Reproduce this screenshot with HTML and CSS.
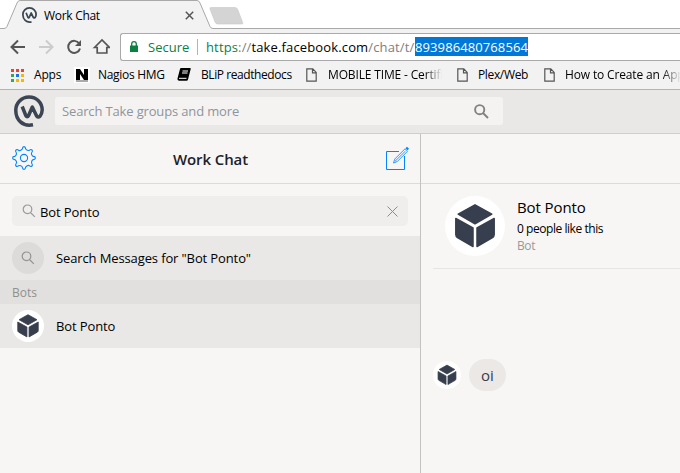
FILE: index.html
```html
<!DOCTYPE html>
<html lang="en">
<head>
<meta charset="utf-8">
<title>Work Chat</title>
<link rel="stylesheet" href="styles.css">
</head>
<body>
<svg class="defs" width="0" height="0">
  <symbol id="logo" viewBox="0 0 30 32"><g fill="none" stroke="#3b4553" stroke-width="3.500" stroke-linejoin="round"><path d="M19 29.800C8.500 32 1.800 24.500 1.800 15.500A13.200 13.200 0 0 1 15 1.900C22.500 1.900 28.200 7.500 28.200 15Q28.100 18.500 26 21.200Q24 23 22.500 20.700L18.300 12L14.600 20.500Q13.200 22.800 11.800 20.500L8.200 11.500"/></g></symbol>
  <symbol id="cube" viewBox="0 0 60 60"><g fill="#373e4d" stroke="#373e4d" stroke-width="1.500" stroke-linejoin="round"><path d="M30 8.800L46.800 18.200 30 27.800 13.200 18.200z"/><path d="M10.800 22.500L28 32v18.500l-15.500-9q-1.700-1-1.700-3z"/><path d="M49.200 22.500L32 32v18.500l15.500-9q1.700-1 1.700-3z"/></g></symbol>
  <symbol id="search" viewBox="0 0 14 14"><path d="M8.500 8.500l4.300 4.300M9.800 5.300a4.300 4.300 0 1 1-8.600 0 4.300 4.300 0 0 1 8.600 0z" fill="none" stroke="currentColor" stroke-width="1.200"/></symbol>
  <symbol id="page" viewBox="0 0 11 14"><path d="M.8.800h6l3.400 3.600v8.800H.8zM6.500.800v4h3.700" fill="none" stroke="#555" stroke-width="1.200"/></symbol>
</svg>

<div class="tabstrip">
  <svg class="tab-shape" width="245" height="29"><path d="M0 28.500H4Q6 28.500 7 26.500L17 3Q18 .5 20 .5H197Q199 .5 200 3L210 26.500Q211 28.500 213 28.500V29H0z" fill="#f2f2f2"/><path d="M0 28.500H4Q6 28.500 7 26.500L17 3Q18 .5 20 .5H197Q199 .5 200 3L210 26.500Q211 28.500 213 28.500H245" fill="none" stroke="#a9a9a9"/><path d="M211 7.500h24q2 0 2.700 2l5 13q.7 1.500-1 1.500h-24q-2 0-2.700-2l-5-13q-.5-1.500 1-1.500z" fill="#d4d4d4" stroke="#c8c8c8" stroke-width=".6"/></svg>
  <div class="tab">
    <svg width="15" height="16"><use href="#logo"/></svg>
    <span class="tab-title">Work Chat</span>
    <svg class="tab-close" width="9" height="9"><path d="M.8.800l7.400 7.400M8.200.800L.8 8.200" stroke="#555" stroke-width="1.500"/></svg>
  </div>
</div>

<div class="toolbar">
  <svg class="nav" width="110" height="28">
    <g fill="none" stroke="#555" stroke-width="2">
      <path d="M25 14H12M18 7.500L11.500 14l6.500 6.500"/>
      <path d="M39 14h13M46 7.500l6.500 6.500-6.500 6.500" stroke="#ccc"/>
      <path d="M79.200 10.500A6 6 0 1 0 80 15.500"/><path d="M81 7v6h-6z" fill="#555" stroke="none"/>
      <path d="M94.500 14.500L102 7l7.500 7.500h-2.700V20h-9.600v-5.500z" stroke-width="1.700"/>
    </g>
  </svg>
  <div class="omnibox">
    <svg width="8" height="12"><path d="M0 4.500h8V11H0z" fill="#0b8043"/><path d="M1.700 5V3a2.300 2.300 0 0 1 4.600 0v2" fill="none" stroke="#0b8043" stroke-width="1.300"/></svg>
    <span class="secure">Secure</span>
    <span class="url"><span class="scheme">https</span><span class="dim">://</span>take.facebook.com<span class="dim">/chat/t/</span></span><span class="selected">893986480768564</span>
  </div>
</div>

<div class="bookmarks">
  <svg class="bm-icon" width="14" height="14"><path d="M1 1h3v3H1zM6 1h3v3H6zM11 1h3v3h-3z" fill="#ea4335"/><path d="M1 6h3v3H1zM1 11h3v3H1z" fill="#34a853"/><path d="M6 6h3v3H6z" fill="#1a73e8"/><path d="M11 6h3v3h-3zM6 11h3v3H6zM11 11h3v3h-3z" fill="#fbb400"/></svg>
  <span class="bm apps">Apps</span>
  <svg class="bm-icon" width="16" height="16"><path d="M0 0h16v16H0z" fill="#fff"/><path d="M2 2h4l4 6V2h4v11h-4L6 7v6H2z" fill="#000"/><path d="M2 14h12" stroke="#555"/></svg>
  <span class="bm nagios">Nagios HMG</span>
  <svg class="bm-icon" width="14" height="13"><path d="M4 0h9q1 0 .7 1L11 11.500q-.3 1.200-1.500 1.200H2Q0 12.500.5 10.500L3 1Q3.200 0 4 0z"/><path d="M5.500 3h5.500M5 5h5.500M2 10.300h7.500" stroke="#fff"/></svg>
  <span class="bm blip">BLiP readthedocs</span>
  <svg class="bm-icon" width="11" height="14"><use href="#page"/></svg>
  <span class="bm mobile">MOBILE TIME - Certifi</span>
  <svg class="bm-icon" width="11" height="14"><use href="#page"/></svg>
  <span class="bm plex">Plex/Web</span>
  <svg class="bm-icon" width="11" height="14"><use href="#page"/></svg>
  <span class="bm create">How to Create an App</span>
</div>

<div class="app-header">
  <svg width="30" height="32"><use href="#logo"/></svg>
  <div class="global-search"><span>Search Take groups and more</span>
    <svg width="15" height="15" viewBox="0 0 15 15"><path d="M9 9l5 5M10.300 5.700a4.600 4.600 0 1 1-9.200 0 4.600 4.600 0 0 1 9.200 0z" fill="none" stroke="#828282" stroke-width="1.900"/></svg>
  </div>
</div>

<div class="panes">
  <div class="sidebar">
    <div class="side-head">
      <svg width="24" height="24" viewBox="-12 -12 24 24"><g fill="none" stroke="#0084ff" stroke-width="1.100" stroke-linejoin="round"><circle r="3.600"/><path d="M-1.600-9.300Q-1.500-11.400 0-11.400T1.600-9.300Q2-8 3.300-7.700T5.500-7.800Q7-9 8-8T7.800-5.500Q7-4.500 7.700-3.300T9.300-1.600Q11.400-1.500 11.400 0T9.300 1.600Q8 2 7.700 3.300T7.800 5.500Q9 7 8 8T5.500 7.800Q4.500 7 3.300 7.700T1.600 9.300Q1.500 11.400 0 11.400T-1.600 9.300Q-2 8-3.300 7.700T-5.500 7.800Q-7 9-8 8T-7.800 5.500Q-7 4.500-7.700 3.300T-9.300 1.600Q-11.400 1.500-11.400 0T-9.300-1.600Q-8-2-7.700-3.300T-7.800-5.500Q-9-7-8-8T-5.500-7.800Q-4.500-7-3.300-7.700T-1.600-9.300z"/></g></svg>
      <h1>Work Chat</h1>
      <svg width="24" height="25"><path d="M14 6.500H1.500v18h18V11" fill="none" stroke="#0084ff"/><path d="M8.500 18l1.300-4L20 3.800l2.500 2.500L12.300 16.500zM10 16.300L20.500 6" fill="none" stroke="#0084ff" stroke-width=".8"/><path d="M20.500 3.300L22 1.800l2 2-1.500 1.500z" fill="#0084ff"/></svg>
    </div>
    <div class="side-search">
      <svg class="gray" width="14" height="14"><use href="#search"/></svg><span class="query">Bot Ponto</span>
      <svg class="clear" width="11" height="11"><path d="M.5.500l10 10M10.500.500l-10 10" stroke="#8c8c8c"/></svg>
    </div>
    <div class="result">
      <div class="round dark"><svg width="14" height="14"><use href="#search"/></svg></div>
      <span class="messages">Search Messages for "Bot Ponto"</span>
    </div>
    <div class="section"><span>Bots</span></div>
    <div class="result">
      <div class="round"><svg width="32" height="32"><use href="#cube"/></svg></div>
      <span class="bot-name">Bot Ponto</span>
    </div>
  </div>
  <div class="chat">
    <div class="chat-head"></div>
    <div class="profile">
      <div class="avatar"><svg width="60" height="60"><use href="#cube"/></svg></div>
      <div class="info"><div class="name"><span>Bot Ponto</span></div><div class="likes"><span>0 people like this</span></div><div class="kind"><span>Bot</span></div></div>
    </div>
    <div class="message">
      <div class="mini"><svg width="28" height="28"><use href="#cube"/></svg></div>
      <div class="bubble">oi</div>
    </div>
  </div>
</div>
</body>
</html>
```

FILE: styles.css
```css
* { box-sizing: border-box; }
body { margin: 0; width: 680px; height: 473px; overflow: hidden; background: #f7f6f4; font-family: "Open Sans", sans-serif; color: #000; white-space: nowrap; }
svg { display: block; flex: none; }
.defs { position: absolute; }

.tabstrip { position: relative; height: 29px; background: #fff; border-bottom: 1px solid #a9a9a9; }
.tab-shape { position: absolute; left: 0; top: 0; }
.tab { position: relative; display: flex; align-items: center; width: 194px; height: 29px; padding: 1px 0 0 22px; }
.tab-title { margin-left: 7px; font-size: 12px; letter-spacing: -.3px; }
.tab-close { margin-left: auto; }

.toolbar { display: flex; height: 32px; padding-top: 4px; background: #f2f2f2; }
.omnibox { display: flex; align-items: center; flex: 1; height: 28px; margin-left: 10px; padding-left: 9px; background: #fff; border: 1px solid #a9a9a9; border-right: 0; border-radius: 3px 0 0 3px; font-size: 13px; }
.secure { width: 50px; margin-left: 10px; color: #0b8043; border-right: 1px solid #b4b4b4; line-height: 16px; }
.url { width: 209px; margin-left: 8px; letter-spacing: .14px; }
.scheme { color: #0b8043; }
.dim { color: #808080; }
.selected { width: 113px; height: 19px; margin-top: -2px; line-height: 20px; background: #0078d7; color: #fff; letter-spacing: .1px; }

.bookmarks { display: flex; align-items: center; height: 29px; padding: 0 0 1px 10px; background: #f2f2f2; border-bottom: 1px solid #b4b4b4; font-size: 12px; }
.bm { flex: none; }
.apps { width: 40px; margin-left: 10px; letter-spacing: -.2px; }
.nagios { width: 79px; margin-left: 8px; letter-spacing: -.3px; }
.blip { width: 105px; margin-left: 10px; letter-spacing: -.42px; }
.mobile { width: 129px; margin-left: 11px; letter-spacing: -.15px; }
.plex { width: 66px; margin-left: 10px; letter-spacing: -.35px; }
.create { width: 115px; margin-left: 10px; letter-spacing: -.15px; }
.mobile { mask-image: linear-gradient(90deg, #000 97px, transparent 114px); }
.create { mask-image: linear-gradient(90deg, #000 97px, transparent 116px); }

.app-header { display: flex; align-items: center; height: 44px; padding: 0 0 1px 14px; background: #e9e8e6; border-bottom: 1px solid #cfcecd; }
.global-search { display: flex; align-items: center; justify-content: space-between; width: 448px; height: 28px; margin-left: 11px; padding: 0 14px 0 7px; background: #f4f3f1; border-radius: 3px; color: #90949c; font-size: 13px; letter-spacing: -.15px; }

.panes { display: flex; height: 339px; }
.sidebar { width: 421px; border-right: 1px solid #c2c2c1; }
.side-head { display: flex; align-items: center; justify-content: space-between; height: 50px; padding: 0 11px 2px 12px; border-bottom: 1px solid #dcdbd9; }
.side-head h1 { margin: 3px 0 0; font-size: 15px; font-weight: 600; letter-spacing: -.1px; color: #1d2129; }
.side-search { display: flex; align-items: center; height: 30px; margin: 12px 12px 10px; padding: 0 10px; background: #efeeec; border-radius: 5px; font-size: 13px; }
.gray { color: #999; }
.query { margin: 1px 0 0 4px; letter-spacing: -.1px; }
.clear { margin-left: auto; }
.result { display: flex; align-items: center; height: 44px; padding-left: 12px; background: #e9e8e6; font-size: 13px; letter-spacing: -.12px; }
.round { display: grid; place-items: center; width: 32px; height: 32px; margin-right: 12px; border-radius: 50%; background: #fff; }
.dark { background: #dcdbd9; color: #929292; }
.section { height: 24px; padding-left: 12px; line-height: 25px; background: #e1e0de; color: #90908f; font-size: 12px; }

.chat { flex: 1; }
.chat-head { height: 50px; border-bottom: 1px solid #dcdbd9; }
.profile { display: flex; height: 85px; margin-left: 12px; padding: 12px 0 0 12px; border-bottom: 1px solid #e6e5e3; }
.avatar { width: 60px; height: 60px; border-radius: 50%; background: #fff; }
.info { margin-left: 12px; }
.name { height: 23px; line-height: 22px; font-size: 15px; letter-spacing: -.1px; }
.likes { height: 19px; line-height: 20px; font-size: 12px; letter-spacing: -.45px; }
.kind { height: 16px; line-height: 16px; font-size: 12px; letter-spacing: -.4px; color: #999; }
.message { display: flex; align-items: center; margin: 90px 0 0 12px; }
.mini { width: 28px; height: 28px; border-radius: 50%; background: #fff; }
.bubble { width: 37px; height: 32px; margin-left: 8px; border-radius: 16px; background: #ece8e6; color: #373e4d; text-align: center; line-height: 32px; font-size: 15px; }
```
